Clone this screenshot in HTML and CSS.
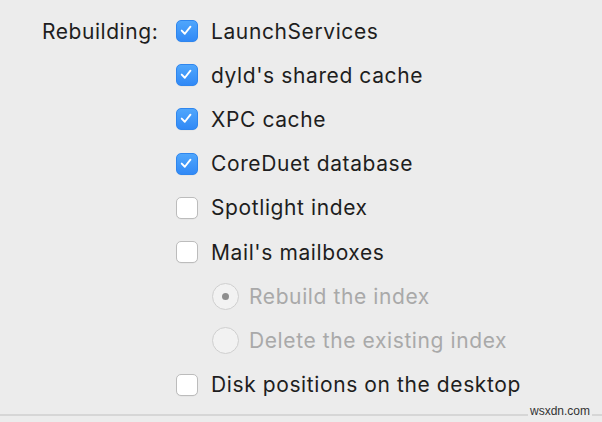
FILE: index.html
```html
<!DOCTYPE html>
<html>
<head>
<meta charset="utf-8">
<link rel="stylesheet" href="styles.css">
</head>
<body>
<div class="panel">
  <div class="form">
    <div class="label">Rebuilding:</div>
    <div class="options">
      <div class="row"><span class="cb on"><svg viewBox="0 0 22 22"><path d="M6.2 11.6 L9.6 15 L15.8 7.2" /></svg></span><span class="txt">LaunchServices</span></div>
      <div class="row"><span class="cb on"><svg viewBox="0 0 22 22"><path d="M6.2 11.6 L9.6 15 L15.8 7.2" /></svg></span><span class="txt">dyld's shared cache</span></div>
      <div class="row"><span class="cb on"><svg viewBox="0 0 22 22"><path d="M6.2 11.6 L9.6 15 L15.8 7.2" /></svg></span><span class="txt">XPC cache</span></div>
      <div class="row"><span class="cb on"><svg viewBox="0 0 22 22"><path d="M6.2 11.6 L9.6 15 L15.8 7.2" /></svg></span><span class="txt">CoreDuet database</span></div>
      <div class="row"><span class="cb"></span><span class="txt">Spotlight index</span></div>
      <div class="row"><span class="cb"></span><span class="txt">Mail's mailboxes</span></div>
      <div class="row sub"><span class="radio sel"></span><span class="txt dis">Rebuild the index</span></div>
      <div class="row sub"><span class="radio"></span><span class="txt dis">Delete the existing index</span></div>
      <div class="row"><span class="cb"></span><span class="txt">Disk positions on the desktop</span></div>
    </div>
  </div>
  <div class="rule"><span class="mark">wsxdn.com</span></div>
</div>
</body>
</html>
```

FILE: styles.css
```css
html, body {
  margin: 0;
  padding: 0;
  background: #ececec;
}
body {
  width: 602px;
  height: 422px;
  overflow: hidden;
  font-family: Inter, "Liberation Sans", sans-serif;
  font-size: 21px;
  color: #1e1e1e;
}
.panel {
  padding-top: 9px;
}
.form {
  display: grid;
  grid-template-columns: 134px 1fr;
  padding-left: 42px;
}
.label {
  height: 44.2px;
  display: flex;
  align-items: center;
  letter-spacing: 0.55px;
}
.options {
  display: flex;
  flex-direction: column;
}
.row {
  height: 44.2px;
  display: flex;
  align-items: center;
}
.row.sub {
  padding-left: 36px;
}
.txt {
  letter-spacing: 0.6px;
  margin-left: 13px;
  white-space: nowrap;
}
.txt.dis {
  color: #a9a9a9;
  margin-left: 10px;
}
.cb {
  width: 22px;
  height: 22px;
  box-sizing: border-box;
  border-radius: 5px;
  background: #fff;
  border: 1px solid #bcbcbc;
  box-shadow: 0 0.5px 0.5px rgba(0,0,0,0.06);
  flex: none;
  display: block;
}
.cb.on {
  background: linear-gradient(#4fa6fc, #3189f6);
  border: 1px solid #2f86ee;
}
.cb svg {
  display: block;
  width: 20px;
  height: 20px;
  margin: 0;
}
.cb svg path {
  fill: none;
  stroke: #fff;
  stroke-width: 2.1;
  stroke-linecap: round;
  stroke-linejoin: round;
  transform: translate(-1px, -1px);
}
.radio {
  width: 27px;
  height: 27px;
  box-sizing: border-box;
  border-radius: 50%;
  border: 1px solid #cfcfcf;
  background: #f2f2f2;
  flex: none;
  display: flex;
  align-items: center;
  justify-content: center;
}
.radio.sel::after {
  content: "";
  width: 7px;
  height: 7px;
  border-radius: 50%;
  background: #8e8e8e;
}
.rule {
  position: relative;
  margin-top: 7px;
  height: 2px;
  background: #d6d6d6;
}
.mark {
  position: absolute;
  left: 528px;
  top: -10px;
  font-family: "Liberation Sans", sans-serif;
  font-size: 12px;
  line-height: 14px;
  color: #333;
  background: #ececec;
  padding: 0 2px;
}
```
